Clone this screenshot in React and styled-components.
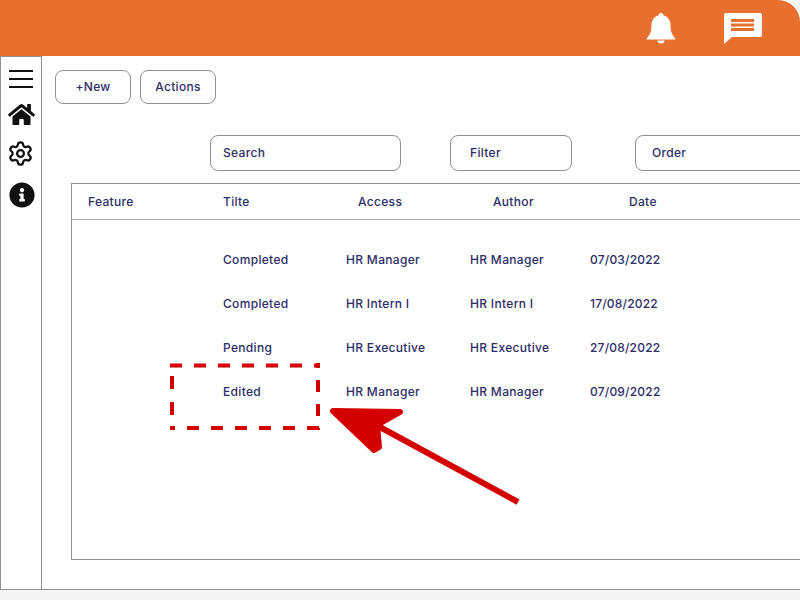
import React from "react";
import styled, { createGlobalStyle } from "styled-components";
import { FaHome, FaInfoCircle } from "react-icons/fa";
import { Settings } from "lucide-react";

const rows = [
  { title: "Completed", access: "HR Manager", author: "HR Manager", date: "07/03/2022" },
  { title: "Completed", access: "HR Intern I", author: "HR Intern I", date: "17/08/2022" },
  { title: "Pending", access: "HR Executive", author: "HR Executive", date: "27/08/2022" },
  { title: "Edited", access: "HR Manager", author: "HR Manager", date: "07/09/2022" },
];

export default function App() {
  return (
    <Page>
      <GlobalStyle />
      <TopBar>
        <svg width="30" height="31" viewBox="0 0 30 31" fill="#fff">
          <path d="M15 0C16.5 0 17.5 1 17.5 2.6C22 3.6 24.5 7.5 24.5 12C24.5 18 25.5 21 29 25Q30 26.5 28.5 26.5H1.5Q0 26.5 1 25C4.5 21 5.5 18 5.5 12C5.5 7.5 8 3.6 12.5 2.6C12.5 1 13.5 0 15 0Z" />
          <path d="M11.5 27.5H18.5A3.5 3 0 0 1 11.5 27.5Z" />
        </svg>
        <svg width="38" height="31" viewBox="0 0 38 31" fill="#fff">
          <path d="M2 0H36A2 2 0 0 1 38 2V22A2 2 0 0 1 36 24H8L0 31V2A2 2 0 0 1 2 0Z" />
          <path d="M7 6H30V9H7ZM7 10.5H30V13.5H7ZM7 15H30V18H7Z" fill="#e8702f" />
        </svg>
      </TopBar>
      <Body>
        <SideRail>
          <MenuLines>
            <span />
            <span />
            <span />
          </MenuLines>
          <HomeIcon size={27} color="#111" />
          <GearIcon size={27} color="#111" strokeWidth={2} />
          <InfoIcon size={26} color="#111" />
        </SideRail>
        <Main>
          <Actions>
            <ActionButton>+New</ActionButton>
            <ActionButton>Actions</ActionButton>
          </Actions>
          <Filters>
            <Field $width={191} $pad={13}>Search</Field>
            <Field $width={122} $pad={20}>Filter</Field>
            <Field $width={200} $pad={17}>Order</Field>
          </Filters>
          <Table>
            <HeadRow>
              <span>Feature</span>
              <span>Tilte</span>
              <span>Access</span>
              <span>Author</span>
              <span>Date</span>
            </HeadRow>
            <RowList>
              {rows.map((row, i) => (
                <Row key={i}>
                  <span />
                  <span>{row.title}</span>
                  <span>{row.access}</span>
                  <span>{row.author}</span>
                  <DateCell>{row.date}</DateCell>
                </Row>
              ))}
            </RowList>
          </Table>
        </Main>
      </Body>
      <Annotation width="800" height="600" viewBox="0 0 800 600">
        <g stroke="#d40000" strokeWidth="4" fill="none" strokeDasharray="12 12">
          <path d="M170 365.5H319" />
          <path d="M318 363V430" strokeDashoffset="7" />
          <path d="M172 376V430" strokeDasharray="13 13" />
          <path d="M170 428H320" strokeDashoffset="7" />
        </g>
        <path d="M518 502 L378 426" stroke="#d40000" strokeWidth="6" fill="none" />
        <path d="M333 411 L400 412 L377 425 L379 447 L374 450 Z" fill="#d40000" stroke="#d40000" strokeWidth="6" strokeLinejoin="round" />
      </Annotation>
    </Page>
  );
}

const GlobalStyle = createGlobalStyle`
  html, body {
    margin: 0;
    padding: 0;
    background: #f5f5f5;
  }
`;

const Page = styled.div`
  position: relative;
  width: 800px;
  height: 600px;
  overflow: hidden;
  background: #f5f5f5;
  font-family: Inter, "Noto Sans", sans-serif;
  font-size: 12px;
  font-weight: 500;
  letter-spacing: 0.32px;
  color: #2b2d66;
`;

const TopBar = styled.header`
  height: 56px;
  background: #e8702f;
  border-top-right-radius: 22px;
  box-sizing: border-box;
  padding: 0 38px 0 0;
  display: flex;
  align-items: center;
  justify-content: flex-end;
  gap: 48px;
`;

const Body = styled.div`
  height: 534px;
  display: flex;
  background: #fff;
  border-bottom: 1px solid #8f8f8f;
  box-sizing: border-box;
`;

const SideRail = styled.nav`
  width: 42px;
  flex: none;
  box-sizing: border-box;
  border-left: 1px solid #8f8f8f;
  border-right: 1px solid #8f8f8f;
  border-top: 1px solid #8f8f8f;
  padding-top: 13px;
  display: flex;
  flex-direction: column;
  align-items: center;
`;

const MenuLines = styled.div`
  width: 24px;
  display: flex;
  flex-direction: column;
  gap: 6px;

  span {
    display: block;
    height: 2px;
    background: #111;
  }
`;

const HomeIcon = styled(FaHome)`
  margin-top: 13px;
`;

const GearIcon = styled(Settings)`
  margin: 12px 1px 0 0;
`;

const InfoIcon = styled(FaInfoCircle)`
  margin: 15px 0 0 2px;
`;

const Main = styled.main`
  flex: 1;
  min-width: 0;
  display: flex;
  flex-direction: column;
`;

const Actions = styled.div`
  display: flex;
  gap: 9px;
  padding: 14px 0 0 13px;
`;

const ActionButton = styled.div`
  width: 76px;
  height: 34px;
  box-sizing: border-box;
  border: 1px solid #8f8f8f;
  border-radius: 8px;
  padding-bottom: 1px;
  display: flex;
  align-items: center;
  justify-content: center;
`;

const Filters = styled.div`
  display: flex;
  gap: 49px;
  margin-top: 31px;
  padding-left: 168px;

  & > :nth-child(3) {
    margin-left: 14px;
  }
`;

const Field = styled.div`
  width: ${(p) => p.$width}px;
  flex: none;
  height: 36px;
  box-sizing: border-box;
  border: 1px solid #8f8f8f;
  border-radius: 8px;
  padding: 0 0 2px ${(p) => p.$pad - 1}px;
  display: flex;
  align-items: center;
`;

const Table = styled.section`
  width: 760px;
  height: 377px;
  flex: none;
  margin: 12px 0 0 29px;
  box-sizing: border-box;
  border: 1px solid #8f8f8f;
`;

const HeadRow = styled.div`
  height: 36px;
  box-sizing: border-box;
  border-bottom: 1px solid #a8a8a8;
  padding-left: 16px;
  display: grid;
  grid-template-columns: 135px 135px 135px 136px 100px;
  align-items: center;
`;

const RowList = styled.div`
  padding: 17px 0 0 151px;
`;

const Row = styled.div`
  height: 44px;
  display: grid;
  grid-template-columns: 0 123px 124px 120px 100px;
  align-items: center;
`;

const DateCell = styled.span`
  letter-spacing: 0.2px;
`;

const Annotation = styled.svg`
  position: absolute;
  inset: 0;
  pointer-events: none;
`;
